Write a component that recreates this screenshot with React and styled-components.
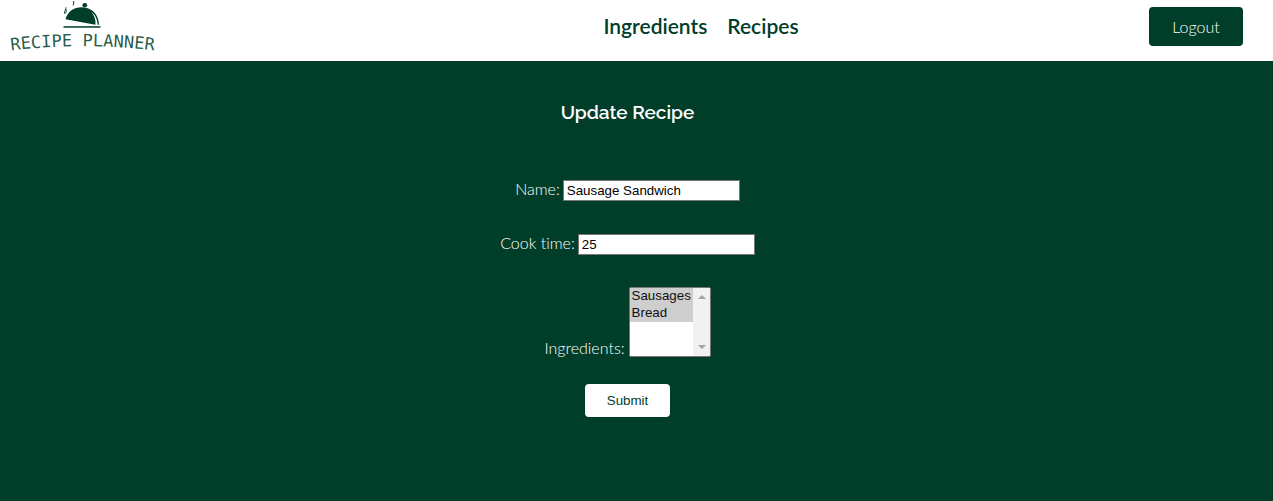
import React from "react";
import styled, { createGlobalStyle } from "styled-components";

const green = "#003e29";

const GlobalStyle = createGlobalStyle`
  *, *::before, *::after { box-sizing: border-box; }
  body {
    margin: 0;
    min-height: 100vh;
    background: ${green};
    font-family: Lato, sans-serif;
    font-weight: 300;
    font-size: 16px;
  }
`;

const Header = styled.header`
  display: flex;
  justify-content: space-between;
  align-items: flex-start;
  padding: 0 30px 0 10px;
  height: 61px;
  background: #fff;
`;

const LogoLink = styled.a`
  display: block;
  color: ${green};
  svg { display: block; }
`;

const Nav = styled.nav`
  display: flex;
  gap: 20px;
  padding: 13px 0 0 96px;
`;

const NavLink = styled.a`
  color: ${green};
  font-size: 21px;
  font-weight: 600;
  line-height: 26px;
  text-decoration: none;
`;

const Button = styled.button`
  border: 0;
  border-radius: 4px;
  cursor: pointer;
`;

const LogoutButton = styled(Button)`
  min-width: 94px;
  margin-top: 7px;
  padding: 10px 20px;
  background: ${green};
  color: #fff;
  font: 300 16px/19px Lato, sans-serif;
`;

const SubmitButton = styled(Button)`
  padding: 9px 22px;
  background: #fff;
  color: ${green};
  font-family: "Liberation Sans", Arial, sans-serif;
  line-height: 15px;
`;

const Main = styled.main`
  padding: 40px 18px 40px 0;
  color: #fff;
`;

const Title = styled.h1`
  margin: 0 0 56px;
  font: 600 19px/23px Raleway, Lato, sans-serif;
  text-align: center;
`;

const Form = styled.form`
  display: flex;
  flex-direction: column;
  align-items: center;
  gap: 33px;
`;

const Field = styled.div`
  display: flex;
  align-items: ${(p) => (p.$tall ? "flex-end" : "flex-start")};
  gap: ${(p) => (p.$tall ? 4 : 3)}px;
  line-height: ${(p) => (p.$tall ? 19 : 17)}px;
  font-variant-ligatures: none;
`;

const LastRow = styled.div`
  display: flex;
  flex-direction: column;
  align-items: center;
  gap: 27px;
  margin-top: -1px;
`;

const TextInput = styled.input`
  width: 177px;
  height: 21px;
  padding: 1px 3px;
  border: 1px solid #767676;
  background: #fff;
  color: #000;
  font-family: "Liberation Sans", Arial, sans-serif;
`;

const ListFrame = styled.div`
  display: flex;
  height: 70px;
  border: 1px solid #767676;
  border-radius: 2px;
  background: #fff;
  overflow: hidden;
`;

const ListBox = styled.select`
  width: 63px;
  height: 68px;
  padding: 0;
  border: 0;
  border-radius: 0;
  background: #fff;
  color: #000;
  font-family: "Liberation Sans", Arial, sans-serif;

  option { padding: 0 2px 1px; min-height: 17px; }
`;

const ScrollTrack = styled.div`
  display: flex;
  flex-direction: column;
  justify-content: space-between;
  width: 17px;
  padding: 7px 5px;
  background: #f1f1f1;
  svg { display: block; }
`;

function Logo() {
  return (
    <svg width="147" height="56" viewBox="10 0 147 56" role="img" aria-label="Recipe Planner">
      <g fill="currentColor">
        <path d="M65.5 19.2C67.5 11.5 74 7.2 81.5 7.2 91.5 7.2 98.8 14 99 24.8L97.6 24.8C97.4 19.5 95.5 15 91.5 12 94.6 16 95.8 20 95.5 24.7z" />
        <ellipse cx="84.8" cy="5.2" rx="2.4" ry="2.1" />
        <rect x="63.5" y="26.2" width="37" height="1.5" />
      </g>
      <g fill="none" stroke="currentColor" strokeWidth="1">
        <path d="M65.8 7.3C66.5 9.3 64 10.5 64.700 13.500 66.700 12.500 67 10.500 66 9.500" />
        <path d="M74 1C72.800 2.500 74.500 3.500 73 5.500" />
      </g>
      <path id="logo-arc" d="M11 50.5Q82 42 155 50.5" fill="none" />
      <text fill="currentColor" fillOpacity="0.85" fontFamily="'DejaVu Sans Mono', monospace" fontSize="17" fontWeight="400">
        <textPath href="#logo-arc">RECIPE PLANNER</textPath>
      </text>
    </svg>
  );
}

function ScrollArrow({ points }) {
  return (
    <svg width="8" height="4" viewBox="0 0 8 4">
      <polygon points={points} fill="#a3a3a3" />
    </svg>
  );
}

export default function App() {
  return (
    <>
      <GlobalStyle />
      <Header>
        <LogoLink href="#home"><Logo /></LogoLink>
        <Nav>
          <NavLink href="#ingredients">Ingredients</NavLink>
          <NavLink href="#recipes">Recipes</NavLink>
        </Nav>
        <LogoutButton type="button">Logout</LogoutButton>
      </Header>
      <Main>
        <Title>Update Recipe</Title>
        <Form onSubmit={(e) => e.preventDefault()}>
          <Field>
            <label htmlFor="name">Name:</label>
            <TextInput id="name" type="text" defaultValue="Sausage Sandwich" />
          </Field>
          <Field>
            <label htmlFor="cook-time">Cook time:</label>
            <TextInput id="cook-time" type="text" defaultValue="25" />
          </Field>
          <LastRow>
            <Field $tall>
              <label htmlFor="ingredients">Ingredients:</label>
              <ListFrame>
                <ListBox id="ingredients" multiple size={4} defaultValue={["sausages", "bread"]}>
                  <option value="sausages">Sausages</option>
                  <option value="bread">Bread</option>
                </ListBox>
                <ScrollTrack aria-hidden="true">
                  <ScrollArrow points="0,4 4,0 8,4" />
                  <ScrollArrow points="0,0 4,4 8,0" />
                </ScrollTrack>
              </ListFrame>
            </Field>
            <SubmitButton type="submit">Submit</SubmitButton>
          </LastRow>
        </Form>
      </Main>
    </>
  );
}
